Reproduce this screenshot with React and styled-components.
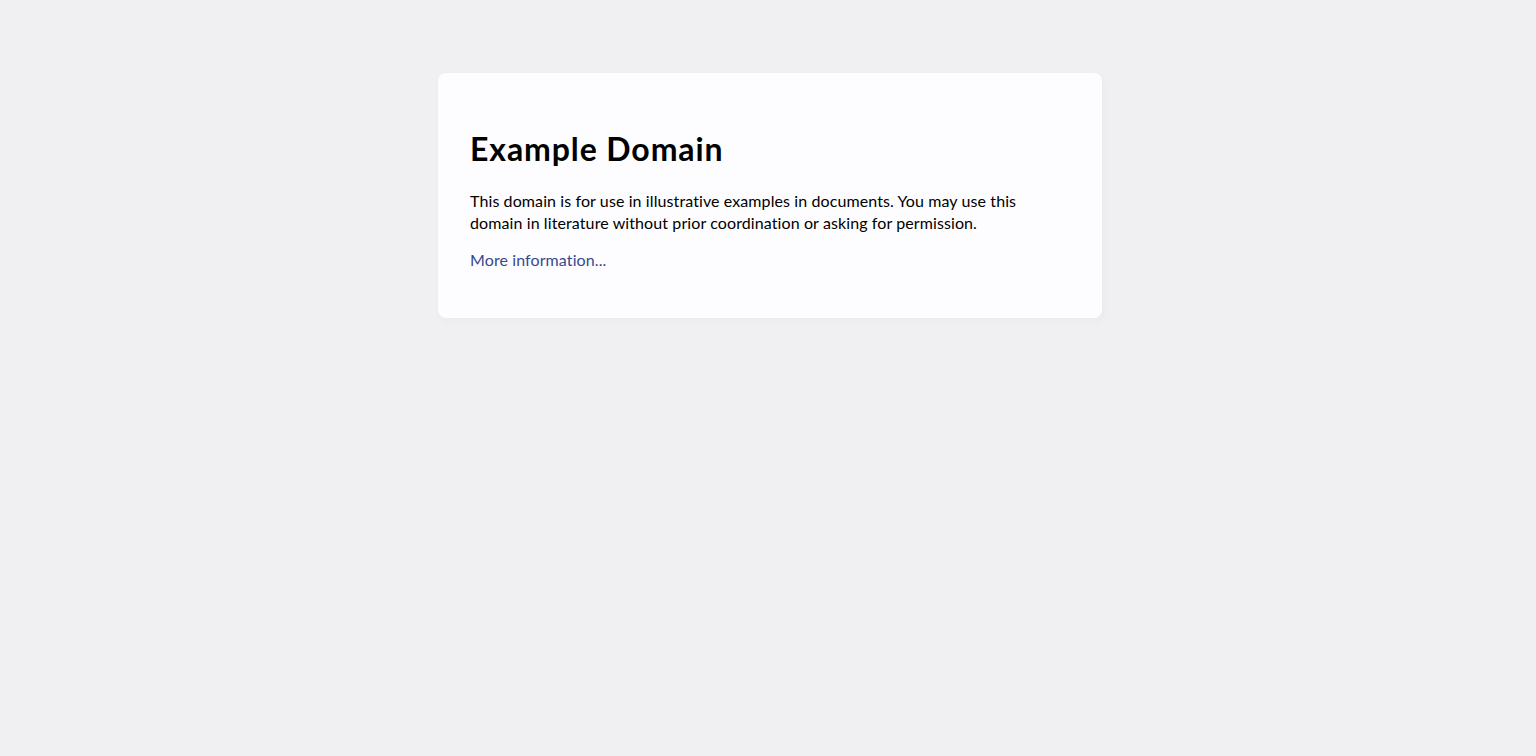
import styled, { createGlobalStyle } from 'styled-components';

const GlobalStyle = createGlobalStyle`
  html, body {
    margin: 0;
    padding: 0;
    background-color: #f0f0f2;
  }

  body {
    font-family: Lato, "Open Sans", "Liberation Sans", sans-serif;
    line-height: 1.33;
  }
`;

const Page = styled.main`
  padding: 73px 0 0 4px;
  min-height: 756px;
  box-sizing: border-box;
`;

const Card = styled.div`
  width: 600px;
  margin: 0 auto;
  padding: 32px;
  background-color: #fdfdff;
  border-radius: 8px;
  box-shadow: 2px 3px 7px 2px rgba(0, 0, 0, 0.02);
`;

const Title = styled.h1`
  font-size: 32px;
  font-weight: 700;
  line-height: 1.33;
  letter-spacing: 0.9px;
  margin: 23.44px 0 19.44px;
  color: #000;
`;

const Text = styled.p`
  font-size: 16px;
  line-height: 1.33;
  letter-spacing: 0.1px;
  margin: 16px 0;
  color: #000;
`;

const Link = styled.a`
  color: #38488f;
  text-decoration: none;
`;

export default function App() {
  return (
    <>
      <GlobalStyle />
      <Page>
        <Card>
          <Title>Example Domain</Title>
          <Text>
            This domain is for use in illustrative examples in documents. You may use this
            domain in literature without prior coordination or asking for permission.
          </Text>
          <Text>
            <Link href="#">More information...</Link>
          </Text>
        </Card>
      </Page>
    </>
  );
}
